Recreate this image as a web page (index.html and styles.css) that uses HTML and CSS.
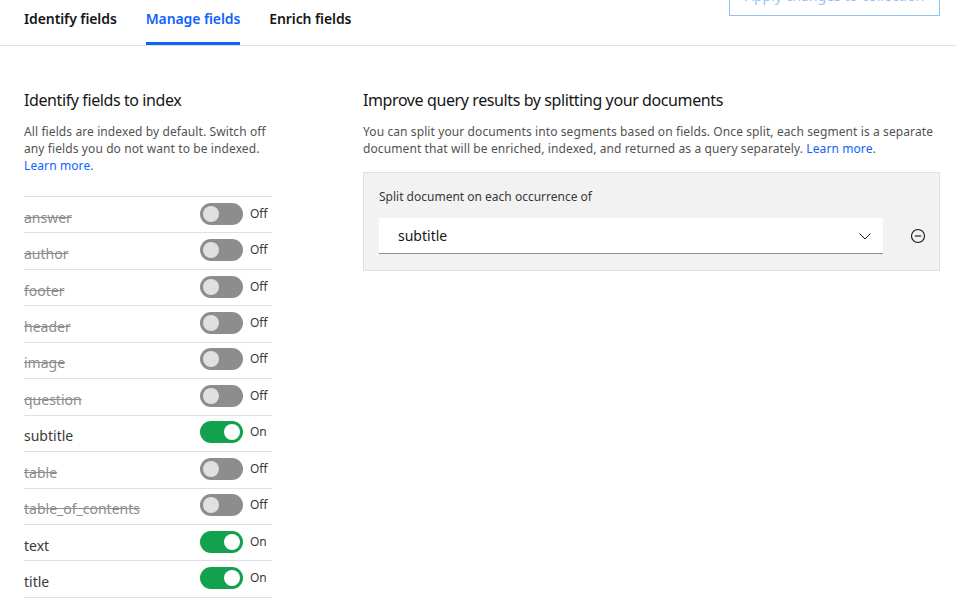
FILE: index.html
```html
<!DOCTYPE html>
<html lang="en">
<head>
<meta charset="utf-8">
<title>Manage fields</title>
<link rel="stylesheet" href="styles.css">
</head>
<body>
<header class="topbar">
  <nav class="tabs">
    <a class="tab">Identify fields</a>
    <a class="tab active">Manage fields</a>
    <a class="tab">Enrich fields</a>
  </nav>
  <button class="apply-btn" disabled>
    <span>Apply changes to collection</span>
    <svg width="16" height="16" viewBox="0 0 16 16" fill="none" stroke="currentColor" stroke-width="1"><path d="M13 8a5 5 0 1 1-1.5-3.5"/><path d="M11.5 2v2.5H9"/></svg>
  </button>
</header>
<main class="content">
  <section class="col-left">
    <h2 class="heading">Identify fields to index</h2>
    <p class="desc">All fields are indexed by default. Switch off any fields you do not want to be indexed. <a class="link">Learn more.</a></p>
    <ul class="field-list">
      <li class="field off"><span class="name">answer</span><span class="toggle"><span class="knob"></span></span><span class="state">Off</span></li>
      <li class="field off"><span class="name">author</span><span class="toggle"><span class="knob"></span></span><span class="state">Off</span></li>
      <li class="field off"><span class="name">footer</span><span class="toggle"><span class="knob"></span></span><span class="state">Off</span></li>
      <li class="field off"><span class="name">header</span><span class="toggle"><span class="knob"></span></span><span class="state">Off</span></li>
      <li class="field off"><span class="name">image</span><span class="toggle"><span class="knob"></span></span><span class="state">Off</span></li>
      <li class="field off"><span class="name">question</span><span class="toggle"><span class="knob"></span></span><span class="state">Off</span></li>
      <li class="field on"><span class="name">subtitle</span><span class="toggle"><span class="knob"></span></span><span class="state">On</span></li>
      <li class="field off"><span class="name">table</span><span class="toggle"><span class="knob"></span></span><span class="state">Off</span></li>
      <li class="field off"><span class="name">table_of_contents</span><span class="toggle"><span class="knob"></span></span><span class="state">Off</span></li>
      <li class="field on"><span class="name">text</span><span class="toggle"><span class="knob"></span></span><span class="state">On</span></li>
      <li class="field on"><span class="name">title</span><span class="toggle"><span class="knob"></span></span><span class="state">On</span></li>
    </ul>
  </section>
  <section class="col-right">
    <h2 class="heading">Improve query results by splitting your documents</h2>
    <p class="desc">You can split your documents into segments based on fields. Once split, each segment is a separate document that will be enriched, indexed, and returned as a query separately. <a class="link">Learn more.</a></p>
    <div class="split-box">
      <div class="split-label">Split document on each occurrence of</div>
      <div class="split-row">
        <div class="select">
          <span>subtitle</span>
          <svg width="16" height="16" viewBox="0 0 16 16" fill="none" stroke="#161616" stroke-width="1"><path d="M2.5 5.5 8 11l5.5-5.5"/></svg>
        </div>
        <button class="remove" aria-label="Remove">
          <svg width="16" height="16" viewBox="0 0 16 16" fill="none" stroke="#161616" stroke-width="1.1"><circle cx="8" cy="8" r="6.5"/><path d="M4.8 8h6.4"/></svg>
        </button>
      </div>
    </div>
  </section>
</main>
</body>
</html>
```
FILE: styles.css
```css
* { box-sizing: border-box; }
html, body { margin: 0; padding: 0; background: #fff; }
body {
  font-family: "Noto Sans", "IBM Plex Sans", sans-serif;
  color: #161616;
  overflow: hidden;
  height: 610px;
}
.topbar {
  display: flex;
  justify-content: space-between;
  align-items: flex-start;
  height: 46px;
  border-bottom: 1px solid #e0e0e0;
  padding: 0 16px 0 24px;
}
.tabs { display: flex; }
.tab {
  font-size: 14px;
  font-weight: 600;
  color: #161616;
  height: 45px;
  line-height: 38px;
  margin-right: 29px;
  border-bottom: 3px solid transparent;
  letter-spacing: -0.1px;
}
.tab.active { color: #0f62fe; border-bottom-color: #0f62fe; }
.apply-btn {
  margin-top: -26px;
  width: 211px;
  height: 42px;
  border: 1px solid #8fc3f8;
  background: #fff;
  color: #8fc3f8;
  font: inherit;
  font-size: 14px;
  white-space: nowrap;
  display: flex;
  align-items: center;
  justify-content: space-between;
  padding: 0 14px 0 15px;
}
.content {
  display: grid;
  grid-template-columns: 248px 1fr;
  column-gap: 91px;
  padding: 44px 16px 0 24px;
}
.heading {
  margin: 0;
  font-size: 16px;
  font-weight: 400;
  line-height: 20px;
  letter-spacing: -0.4px;
  color: #161616;
}
.desc {
  margin: 13px 0 0;
  font-size: 12px;
  line-height: 17px;
  letter-spacing: 0.1px;
  color: #525252;
}
.link { color: #0f62fe; }
.field-list {
  list-style: none;
  margin: 22px 0 0;
  padding: 0;
  border-top: 1px solid #e0e0e0;
}
.field {
  display: flex;
  align-items: center;
  height: 36.45px;
  border-bottom: 1px solid #e0e0e0;
}
.name {
  flex: 1;
  font-size: 14px;
  color: #393939;
  padding-top: 5px;
}
.off .name { color: #8d8d8d; text-decoration: line-through; }
.toggle {
  width: 43px;
  height: 22px;
  border-radius: 11px;
  background: #8d8d8d;
  position: relative;
  margin-top: -2px;
}
.knob {
  position: absolute;
  top: 3px;
  left: 3px;
  width: 16px;
  height: 16px;
  border-radius: 50%;
  background: #e0e0e0;
}
.on .toggle { background: #12a14d; }
.on .knob { left: auto; right: 3px; background: #fff; }
.state {
  width: 29px;
  padding-left: 7px;
  font-size: 12px;
  color: #393939;
  margin-top: -3px;
}
.split-box {
  margin-top: 15px;
  background: #f2f2f2;
  border: 1px solid #e0e0e0;
  padding: 15px 0 16px 15px;
}
.split-label {
  font-size: 12px;
  line-height: 17px;
  color: #393939;
}
.split-row {
  display: flex;
  align-items: center;
  margin-top: 13px;
}
.select {
  flex: 0 0 504px;
  height: 36px;
  background: #fff;
  border-bottom: 1px solid #8d8d8d;
  display: flex;
  align-items: center;
  justify-content: space-between;
  padding: 0 10px 0 19px;
  font-size: 14px;
  color: #161616;
}
.remove {
  margin-left: 27px;
  border: 0;
  background: transparent;
  padding: 0;
  width: 16px;
  height: 16px;
  display: flex;
}
```
